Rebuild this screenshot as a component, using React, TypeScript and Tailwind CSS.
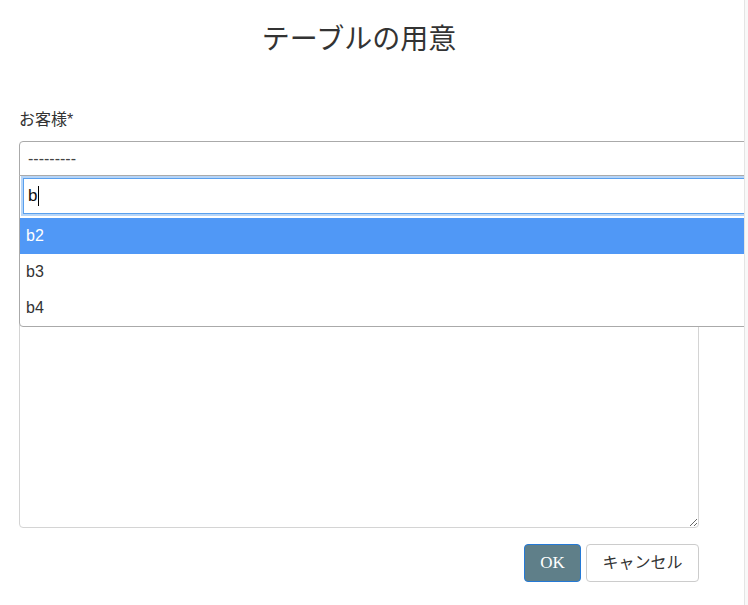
import React from "react";

export default function App() {
  return (
    <div className="flex w-[748px] h-[605px] bg-white overflow-hidden text-[#333] font-['Liberation_Sans','Noto_Sans_CJK_JP',sans-serif]">
      <div className="relative w-[744px] h-full overflow-hidden">
        <div className="pl-[19px] w-[699px]">
          <h1 className="pt-[22px] text-center text-[28px] leading-[36px] font-normal text-[#333]">
            テーブルの用意
          </h1>
          <label className="block mt-[52px] text-[16px] leading-[20px] text-[#333]">お客様*</label>
          <div className="mt-[11px] w-[740px] h-[35px] border border-[#aaa] rounded-tl-[4px] flex items-center pl-[8px] text-[16px] text-[#444]">
            ---------
          </div>
          <textarea
            className="block mt-[132px] w-[680px] h-[220px] border border-[#d4d4d4] rounded-[4px] bg-white outline-none"
            defaultValue=""
          />
          <div className="mt-[16px] flex justify-end gap-[5px]">
            <button className="w-[57px] h-[38px] rounded-[4px] bg-[#5f7f89] border border-[#2479d6] text-white text-[17px] font-['Liberation_Serif',serif]">
              OK
            </button>
            <button className="w-[113px] h-[38px] rounded-[4px] bg-white border border-[#ccc] text-[#333] text-[16px]">
              キャンセル
            </button>
          </div>
        </div>

        <div className="absolute left-[19px] top-[175px] w-[740px] h-[152px] border border-[#aaa] rounded-b-[4px] bg-white">
          <div className="pt-[2px] px-[3px] pb-[4px]">
            <div className="h-[36px] border border-[#5aa0ee] shadow-[0_0_0_2px_#b6d5f8] flex items-center pl-[4px] text-[17px] text-[#111]">
              <span>b</span>
              <span className="inline-block w-[1px] h-[20px] bg-black ml-[1px]" />
            </div>
          </div>
          <div className="h-[36px] flex items-center pl-[6px] bg-[#5098f6] text-white text-[16px]">b2</div>
          <div className="h-[36px] flex items-center pl-[6px] text-[#333] text-[16px]">b3</div>
          <div className="h-[36px] flex items-center pl-[6px] text-[#333] text-[16px]">b4</div>
        </div>
      </div>
      <div className="w-[4px] h-full border-l border-[#e4e4e4] bg-[#f8f8f8]" />
    </div>
  );
}
